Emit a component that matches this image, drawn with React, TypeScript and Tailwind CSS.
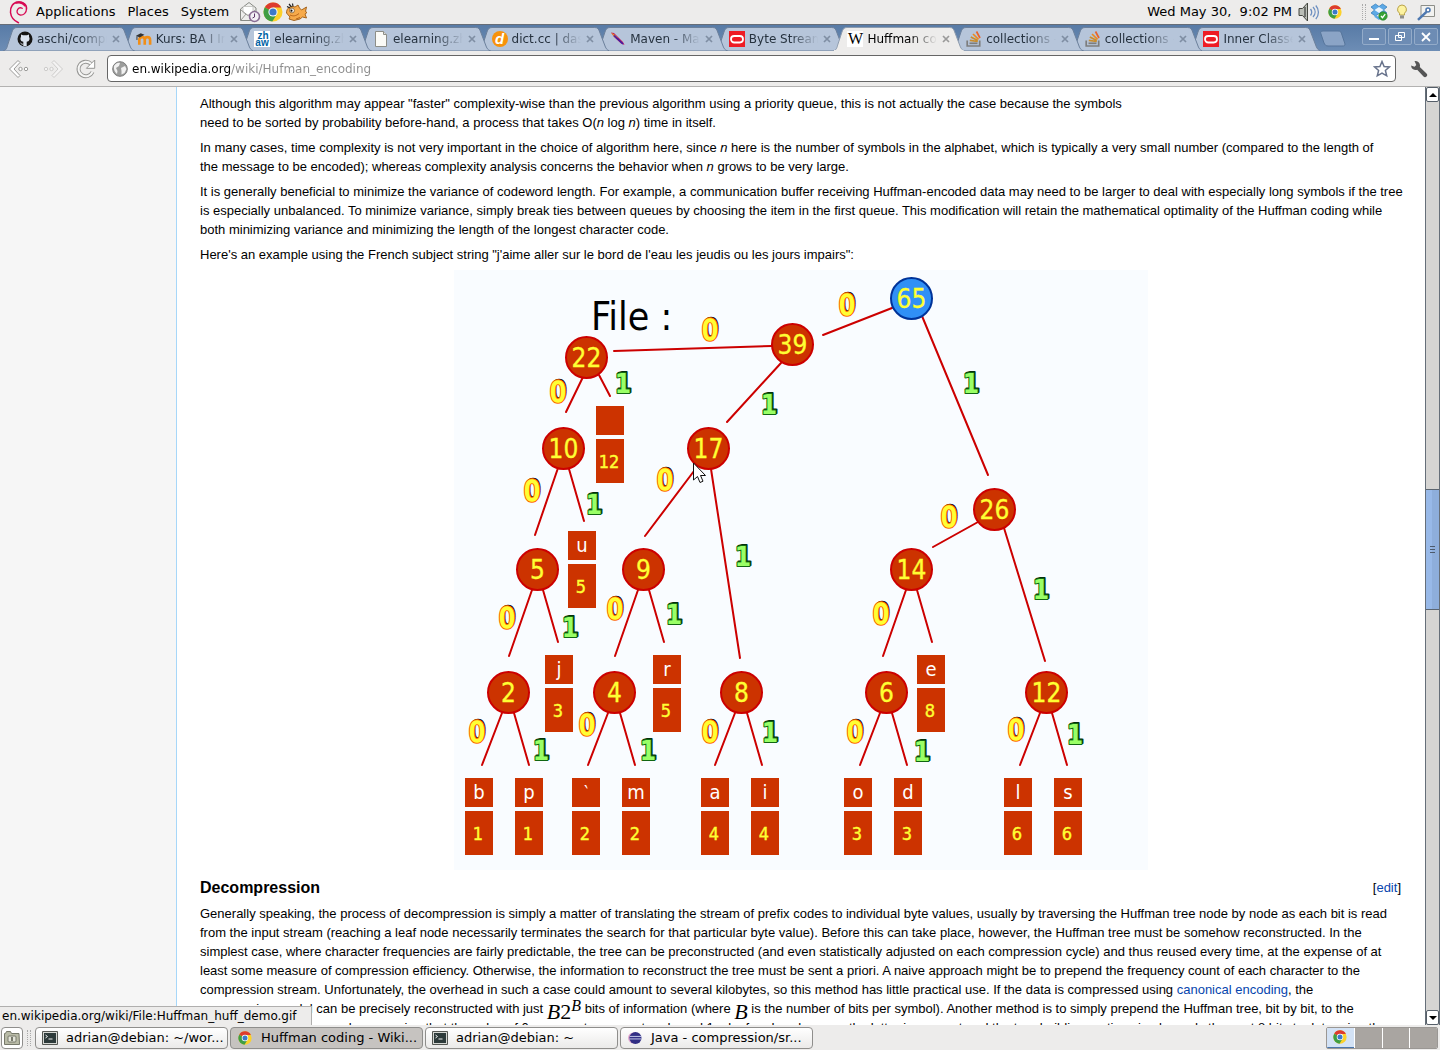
import type { ReactNode } from "react";

/* ---------- icons ---------- */

function DebianSwirl() {
  return (
    <svg viewBox="0 0 20 24" className="h-6 w-5" fill="none" stroke="#d70a53" strokeLinecap="round">
      <path d="M18.500 9C19 4.500 15.500 1.800 10.500 2 5 2.300 2 7 2.500 12.500 3 17 6.500 21 10.500 22.800" strokeWidth="1.500" />
      <path d="M17 5.500C15 2.500 11.500 1.800 8 2.800" strokeWidth="2.200" />
      <path d="M18.500 9c0 4-3 6.300-6.300 6-3-.300-4-3.500-2.500-5.700 1-1.500 3-2 4.500-1" strokeWidth="1.300" />
    </svg>
  );
}

function MailIcon() {
  return (
    <svg viewBox="0 0 22 22" className="size-[22px]">
      <path d="M1.500 8 10 1.500l7 5.500v12.500h-15.500z" fill="#eeeeec" stroke="#888a85" />
      <path d="M4 5.500h10v6l-5 3-5-3z" fill="#fff" stroke="#b5b5b2" strokeWidth=".7" />
      <path d="m2 9 7 5.500 7.500-5.500M2 19l5-6M16 19l-5-6" fill="none" stroke="#9a9a96" />
      <circle cx="15.500" cy="15.500" r="5" fill="#f3eff5" stroke="#8a6d94" strokeWidth="1.600" />
      <path d="M15.500 12.500v3.500l-2 1" fill="none" stroke="#5c3566" />
    </svg>
  );
}

function ChromeIcon({ className }: { className: string }) {
  return (
    <svg viewBox="0 0 20 20" className={className}>
      <circle cx="10" cy="10" r="9.500" fill="#fcd12a" />
      <path d="M10 10 1.800 5.200A9.500 9.500 0 0 1 18.400 5.600H10z" fill="#dd3b2f" />
      <path d="M10 10 1.800 5.200A9.500 9.500 0 0 0 9.300 19.500L13.800 12.300z" fill="#3f9e44" />
      <circle cx="10" cy="10" r="4.600" fill="#fff" />
      <circle cx="10" cy="10" r="3.600" fill="#3b79c9" />
    </svg>
  );
}

function FishIcon() {
  return (
    <svg viewBox="0 0 24 20" className="h-5 w-6">
      <path d="M1.500 11C1.500 6 5 3.500 10 5l3-2 1.500 3 2 2 5-3-1 4.500 1.500 1-2 1.500 1.500 4-4-1-2.500 2-6 1.500-5-1.500 1-2z" fill="#f7aa4a" stroke="#9c5a14" strokeWidth=".9" />
      <path d="M5 13c3 1.500 6 1 9-1.500M11 17l4-1.500" stroke="#b8651a" fill="none" />
      <circle cx="7" cy="8.500" r="2.400" fill="#fff" stroke="#6b4a20" strokeWidth=".7" />
      <circle cx="6.500" cy="8.700" r="1.100" fill="#111" />
      <path d="m2 4.500 3 1.500M4 2l2.500 3M7.500 1.500l.5 3" stroke="#222" strokeWidth="1.200" />
    </svg>
  );
}

function SpeakerIcon() {
  return (
    <svg viewBox="0 0 22 20" className="h-5 w-[22px]">
      <path d="M1 6.500h3.500L9.500 1v18L4.500 13.500H1z" fill="#babdb6" stroke="#44463f" />
      <path d="M7 5v10" stroke="#555753" strokeWidth="1.500" />
      <path d="M12.500 7c1.500 2 1.500 4.500 0 6.500M15 5c2.800 3 2.800 7 0 10M17.800 3.500c3.500 4 3.500 9.500 0 13.500" fill="none" stroke="#6d8fc0" strokeWidth="1.300" />
    </svg>
  );
}

function DropboxIcon() {
  return (
    <svg viewBox="0 0 18 18" className="size-[18px]">
      <path d="M5.500 1 9 3.500 12.500 1 17 4l-3.500 3L17 10l-4.500 3L9 10.500 5.500 13 1 10l3.500-3L1 4z" fill="#5da9e6" stroke="#2f78b5" strokeWidth=".7" />
      <path d="m4.500 7 4.500-3 4.500 3L9 10z" fill="#e9f4fd" />
      <path d="M4.500 12v2L9 17l3-2" fill="#5da9e6" />
      <circle cx="13" cy="13" r="4.200" fill="#36a336" stroke="#1f7a1f" strokeWidth=".6" />
      <path d="m11 13 1.500 1.700 2.700-3.500" fill="none" stroke="#fff" strokeWidth="1.300" />
    </svg>
  );
}

function BulbIcon() {
  return (
    <svg viewBox="0 0 12 16" className="h-4 w-3">
      <path d="M6 1a4.500 4.500 0 0 0-2.500 8.200V11h5V9.200A4.500 4.500 0 0 0 6 1z" fill="#fdf3a0" stroke="#b8a24a" />
      <path d="M4 11.500h4v3H4z" fill="#8e8f8b" />
    </svg>
  );
}

function SearchToolIcon() {
  return (
    <svg viewBox="0 0 20 20" className="size-5">
      <path d="M5 3.500h13.500v11H5z" fill="#f2f2f0" stroke="#8c8e89" />
      <circle cx="12" cy="8" r="2" fill="#fff" stroke="#4d78b0" strokeWidth="1.600" />
      <path d="m10.500 9.800-8.500 8" stroke="#4d78b0" strokeWidth="2.500" />
    </svg>
  );
}

function GithubIcon() {
  return (
    <svg viewBox="0 0 16 16" className="size-4">
      <circle cx="8" cy="8" r="7.500" fill="#161514" />
      <path d="M4 3.500 6 4.300h4L12 3.500v2.300c1.300 2.500.200 4.700-2.300 5v4.200H6.300v-4.200C3.800 10.500 2.700 8.300 4 5.800z" fill="#dce4ef" />
      <path d="M6.300 13.200c-1.500.300-2-.700-2.800-1.200" stroke="#dce4ef" fill="none" />
    </svg>
  );
}

function MoodleIcon() {
  return (
    <svg viewBox="0 0 17 16" className="size-4">
      <path d="M3.500 14V7.500M9.300 14V8.500M15 14V8.500M3.500 8.500C4.500 5.200 8.800 5.200 9.300 8.500 9.800 5.200 14.500 5.200 15 8.500" fill="none" stroke="#f18e16" strokeWidth="2.800" />
      <path d="M0 4.500 5 2l4 1.500L4 6.500z" fill="#333" />
      <path d="M1 5v4" stroke="#333" />
    </svg>
  );
}

function ZhawIcon() {
  return (
    <svg viewBox="0 0 16 16" className="size-4" textAnchor="middle">
      <path d="M0 0h16v16H0z" fill="#fff" />
      <g className="font-['Liberation_Sans',sans-serif]" fontSize="10" fontWeight="bold" fill="#0064a6">
        <text x="9" y="8">zh</text>
        <text x="8" y="15">aw</text>
      </g>
    </svg>
  );
}

function FileIcon() {
  return (
    <svg viewBox="0 0 16 16" className="size-4">
      <path d="M2.500.5h8l3 3v12h-11z" fill="#fbfbf7" stroke="#8d8e88" />
      <path d="M10.500.5v3h3" fill="#ddd" stroke="#8d8e88" />
    </svg>
  );
}

function DictIcon() {
  return (
    <span aria-hidden="true" className="flex size-4 shrink-0 items-center justify-center rounded-full bg-[#f7920b] font-['Liberation_Sans'] text-[15px] leading-4 font-bold text-white italic">
      d
    </span>
  );
}

function MavenIcon() {
  return (
    <svg viewBox="0 0 16 16" className="size-4">
      <path d="M1 1.500 4 2l9 9 1.500 3-3.500-1.500L4 6z" fill="#c2185b" />
      <path d="M1 1.500 5 4l3 3-3-.500z" fill="#f0a020" />
      <path d="m4 4.500 9 8.500" stroke="#3b1fa8" strokeWidth="1.600" />
    </svg>
  );
}

function OracleIcon() {
  return (
    <svg viewBox="0 0 16 16" className="size-4">
      <path d="M0 0h16v16H0z" fill="#ee1c25" />
      <rect x="2" y="5" width="12" height="6.500" rx="3.200" fill="none" stroke="#fff" strokeWidth="1.800" />
    </svg>
  );
}

function WikiIcon() {
  return (
    <span aria-hidden="true" className="flex size-4 shrink-0 items-center justify-center bg-white font-['Liberation_Serif'] text-base leading-4 text-black">
      W
    </span>
  );
}

function StackIcon() {
  return (
    <svg viewBox="0 0 16 16" className="size-4" fill="none">
      <path d="M1.200 9.500v5.500h12.500V9.500" stroke="#7d7d7d" strokeWidth="1.700" />
      <path d="M3.500 12.300h8" stroke="#7d7d7d" strokeWidth="1.700" />
      <path d="m3.800 9.300 8 1.200M4.800 6l7 3.500" stroke="#c98d2e" strokeWidth="1.700" />
      <path d="m7 3 5.500 5.300" stroke="#ee8a1d" strokeWidth="1.700" />
      <path d="m10.500.5 3.500 6.500" stroke="#e8632a" strokeWidth="1.700" />
    </svg>
  );
}

function BackIcon() {
  return (
    <svg viewBox="0 0 22 20" className="h-5 w-[22px]" fill="#fff" stroke="#9b9b99">
      <path d="M10 1.500 1.500 10l8.500 8.500 2-2L6 10l6-6.500z" />
      <circle cx="12.500" cy="10" r="1.700" />
      <circle cx="18" cy="10" r="1.700" />
    </svg>
  );
}

function ReloadIcon() {
  return (
    <svg viewBox="0 0 20 20" className="size-5">
      <path d="M16.500 13A7.300 7.300 0 1 1 15 4.800" fill="none" stroke="#969694" strokeWidth="4" />
      <path d="M18.700 1v8.300h-8.300z" fill="#fff" stroke="#969694" />
      <path d="M16.500 13A7.300 7.300 0 1 1 15 4.800" fill="none" stroke="#f6f6f5" strokeWidth="2" />
    </svg>
  );
}

function GlobeIcon() {
  return (
    <svg viewBox="0 0 16 16" className="size-4">
      <circle cx="8" cy="8" r="7.300" fill="#9c9d9c" stroke="#7c7c7c" />
      <path d="M2 5c2-3 4-3.500 6-3l-1 3-3 2 1.500 3L5 13C2.500 11 1.500 8 2 5zM9 7l4-2 1.500 3-2 4-3 1.500L9.500 10z" fill="#f1f1f1" />
    </svg>
  );
}

function WrenchIcon() {
  return (
    <svg viewBox="0 0 18 18" className="size-[18px]">
      <path d="M4.500 1A4.700 4.700 0 0 1 9.800 7l6.700 6.500a2 2 0 0 1-3 3L7.200 9.700A4.700 4.700 0 0 1 1 5.500l3.500 1.200L6.300 5z" fill="#555" />
    </svg>
  );
}

function TerminalIcon() {
  return (
    <svg viewBox="0 0 16 14" className="h-3.5 w-4">
      <path d="M.5.500h15v13H.5z" fill="#d7d8d4" stroke="#555753" />
      <path d="M2 2h12v10H2z" fill="#2e3b3b" />
      <path d="m3.500 4 2 1.500-2 1.500M6.500 8h4" fill="none" stroke="#eee" />
    </svg>
  );
}

function EclipseIcon() {
  return (
    <svg viewBox="0 0 15 14" className="size-3.5">
      <circle cx="6" cy="7" r="6" fill="#e3a8cf" />
      <circle cx="8" cy="7" r="6.500" fill="#312e84" />
      <path d="M2 5.300h12.500M1.500 8h13" stroke="#cdd3f0" />
    </svg>
  );
}

function FolderIcon() {
  return (
    <svg viewBox="0 0 16 16" className="size-4">
      <path d="M.500 3.500h1l1-2h4l1 2h7.500l.500 11h-15z" fill="#b9bba7" stroke="#76786a" />
      <rect x="4" y="6" width="8" height="6" rx="1" fill="#e4e5da" stroke="#76786a" />
      <path d="M8 7v4" stroke="#76786a" strokeWidth="2" />
    </svg>
  );
}

/* ---------- tab strip ---------- */

type TabInfo = { title: string; icon: ReactNode; active?: boolean; layer: string };

const tabs: TabInfo[] = [
  { title: "aschi/compression", icon: <GithubIcon />, layer: "z-11" },
  { title: "Kurs: BA I Informatik", icon: <MoodleIcon />, layer: "z-10" },
  { title: "elearning.zhaw", icon: <ZhawIcon />, layer: "z-9" },
  { title: "elearning.zhaw", icon: <FileIcon />, layer: "z-8" },
  { title: "dict.cc | das Wörter", icon: <DictIcon />, layer: "z-7" },
  { title: "Maven - Maven", icon: <MavenIcon />, layer: "z-6" },
  { title: "Byte Streams", icon: <OracleIcon />, layer: "z-5" },
  { title: "Huffman coding", icon: <WikiIcon />, active: true, layer: "z-20" },
  { title: "collections -", icon: <StackIcon />, layer: "z-4" },
  { title: "collections -", icon: <StackIcon />, layer: "z-3" },
  { title: "Inner Classes", icon: <OracleIcon />, layer: "z-2" },
];

function Tab({ tab }: { tab: TabInfo }) {
  return (
    <div className={`relative flex h-6 min-w-0 flex-1 items-center pr-px pl-3.5 text-xs leading-4 ${tab.layer}`}>
      <svg viewBox="0 0 132 24" preserveAspectRatio="none" className="absolute top-0 left-0 h-full w-[calc(100%+13px)]">
        <path
          d="M0 24C4 23 4 20 5 17L9 5C10 2 11 .5 14 .5H117C120 .5 121 2 122 5L127 18C128 21 129 23 132 24Z"
          fill={tab.active ? "#edeceb" : "#b6c5da"}
          stroke={tab.active ? "#8e9cae" : "#6b7f9b"}
        />
        {tab.active && <path d="M1 24H131" stroke="#edeceb" strokeWidth="2" />}
      </svg>
      <button className="relative flex min-w-0 flex-1 items-center gap-1 text-left">
        <span className="shrink-0">{tab.icon}</span>
        <span
          className={`flex-1 overflow-hidden whitespace-nowrap [mask-image:linear-gradient(to_right,black_60%,transparent_100%)] ${tab.active ? "text-black" : "text-[#26323f]"}`}
        >
          {tab.title}
        </span>
      </button>
      <button aria-label={`Close ${tab.title}`} className="relative ml-1 flex size-2.5 shrink-0 items-center justify-center">
        <svg viewBox="0 0 8 8" className="size-2">
          <path d="m1 1 6 6M7 1 1 7" stroke={tab.active ? "#9a9a9a" : "#7f8ea3"} strokeWidth="1.700" />
        </svg>
      </button>
    </div>
  );
}

function WindowButton({ label, children }: { label: string; children: ReactNode }) {
  return (
    <button aria-label={label} className="flex h-[17px] w-6 items-center justify-center rounded-xs border border-[#93abc9] bg-[#6d8cb4]">
      <svg viewBox="0 0 12 12" className="size-3" fill="none" stroke="#fff">
        {children}
      </svg>
    </button>
  );
}

/* ---------- Huffman tree figure ---------- */

const nodes: [number, number, number][] = [
  [39, 792.5, 344.5], [22, 586.5, 357.5], [10, 563.5, 448.5], [17, 708.5, 448.5], [26, 994.5, 509.5],
  [5, 537.5, 569.5], [9, 643.5, 569.5], [14, 911.5, 569.5], [2, 508.5, 692.5], [4, 614.5, 692.5],
  [8, 741.5, 692.5], [6, 886.5, 692.5], [12, 1046.5, 692.5], [65, 911.5, 298.5],
];

const edges: [number, number, number, number][] = [
  [892, 308, 823, 335], [922, 316, 988, 475], [772, 346, 614, 351], [781, 363, 727, 422],
  [583, 377, 566, 412], [599, 375, 610, 396], [558, 468, 535, 535], [569, 469, 584, 521],
  [694, 471, 645, 536], [711, 469, 740, 658], [978, 522, 933, 547], [1004, 528, 1045, 661],
  [532, 590, 509, 656], [543, 590, 558, 642], [638, 590, 615, 656], [649, 590, 664, 642],
  [906, 590, 883, 656], [917, 590, 932, 642], [502, 713, 482, 765], [514, 713, 529, 765],
  [608, 713, 588, 765], [620, 713, 635, 765], [735, 713, 715, 765], [747, 713, 762, 765],
  [880, 713, 860, 765], [892, 713, 907, 765], [1040, 713, 1020, 765], [1052, 713, 1067, 765],
];

const zeros: [number, number][] = [
  [847, 305], [710, 330], [558, 392], [532, 491], [665, 480], [949, 517], [507, 618], [615, 609],
  [881, 614], [477, 732], [587, 725], [710, 732], [855, 732], [1016, 730],
];

const ones: [number, number][] = [
  [623, 383], [769, 404], [971, 383], [594, 504], [743, 556], [1041, 589], [570, 627], [674, 614],
  [541, 750], [648, 750], [770, 732], [922, 751], [1075, 734],
];

const leaves: [string, number, number, number][] = [
  ["", 12, 596, 406], ["u", 5, 568, 531], ["j", 3, 545, 655], ["r", 5, 653, 655], ["e", 8, 917, 655],
  ["b", 1, 465, 778], ["p", 1, 515, 778], ["‵", 2, 572, 778], ["m", 2, 622, 778], ["a", 4, 701, 778],
  ["i", 4, 751, 778], ["o", 3, 844, 778], ["d", 3, 894, 778], ["l", 6, 1004, 778], ["s", 6, 1054, 778],
];

function Zero({ x, y }: { x: number; y: number }) {
  return (
    <g fontSize="28" strokeLinejoin="round">
      <text x={x + 1} y={y + 9} fill="#000" stroke="#000" strokeWidth="2.500">0</text>
      <text x={x} y={y + 10} fill="#ff6600" stroke="#ff6600" strokeWidth="3.500">0</text>
      <text x={x} y={y + 10} fill="#ffff33" stroke="#ffff33" strokeWidth="1.500">0</text>
    </g>
  );
}

function One({ x, y }: { x: number; y: number }) {
  return (
    <g fontSize="26" fontWeight="bold" strokeLinejoin="round">
      <text x={x + 1} y={y + 9} fill="#03300a" stroke="#03300a" strokeWidth="2">1</text>
      <text x={x} y={y + 10} fill="#99ff66" stroke="#116611" strokeWidth="2" paintOrder="stroke">1</text>
    </g>
  );
}

function HuffmanTree() {
  return (
    <svg
      viewBox="454 270 694 600"
      role="img"
      aria-label="Huffman tree"
      className="block h-[600px] w-[694px] bg-[#f9fcff] font-['DejaVu_Sans_Condensed','DejaVu_Sans',sans-serif]"
      textAnchor="middle"
    >
      <text x="591" y="330" fontSize="39" textAnchor="start">File :</text>
      {edges.map(([x1, y1, x2, y2]) => (
        <path key={`${x1}-${y1}`} d={`M${x1} ${y1}L${x2} ${y2}`} stroke="#cc0000" strokeWidth="2" strokeLinecap="round" />
      ))}
      {nodes.map(([value, x, y]) => (
        <g key={value + "-" + x}>
          <circle cx={x} cy={y} r="20.5" fill={value === 65 ? "#3090f6" : "#cc3300"} stroke={value === 65 ? "#003399" : "#cc0000"} strokeWidth="2" />
          <text x={x} y={y + 9} fontSize="26" fill="#ffff33" stroke="#ffff33" strokeWidth=".3">{value}</text>
        </g>
      ))}
      {leaves.map(([letter, count, x, y]) => (
        <g key={`${x}-${y}`}>
          <path d={`M${x} ${y}h28v29h-28zM${x} ${y + 33}h28v44h-28z`} fill="#cc3300" />
          <text x={x + 14} y={y + 21} fontSize="20" fill="#fff">{letter}</text>
          <text x={x + 13} y={y + 62} fontSize="18" fill="#ffff33" stroke="#ffff33" strokeWidth=".4">{count}</text>
        </g>
      ))}
      {zeros.map(([x, y]) => (
        <Zero key={`${x}-${y}`} x={x} y={y} />
      ))}
      {ones.map(([x, y]) => (
        <One key={`${x}-${y}`} x={x} y={y} />
      ))}
      <path d="M693.500 463v17l4-3.500 2.500 6 3-1.300-2.500-5.700h5z" fill="#fff" stroke="#111" />
    </svg>
  );
}

/* ---------- taskbar ---------- */

function TaskButton({ icon, label, active }: { icon: ReactNode; label: string; active?: boolean }) {
  return (
    <button
      className={`flex h-[22px] w-[193px] items-center gap-2 rounded-sm border border-[#8f8e8c] pl-1.5 whitespace-nowrap ${active ? "bg-[#c6c3c0]" : "bg-linear-to-b from-white to-[#ebeae9]"}`}
    >
      <span className="flex w-4 shrink-0 justify-center">{icon}</span>
      <span>{label}</span>
    </button>
  );
}

function ScrollButton({ label, d }: { label: string; d: string }) {
  return (
    <button aria-label={label} className="flex h-[15px] w-full shrink-0 items-center justify-center rounded-xs border border-[#555e68] bg-white">
      <svg viewBox="0 0 8 4" className="h-1 w-2">
        <path d={d} />
      </svg>
    </button>
  );
}

export default function App() {
  return (
    <div className="flex h-screen flex-col overflow-hidden bg-[#edeceb] font-['DejaVu_Sans',sans-serif] text-[13px] leading-4 text-black">
      <header className="flex h-6 shrink-0 items-center justify-between pr-1 pl-2">
        <nav className="flex items-center">
          <span className="mr-2"><DebianSwirl /></span>
          <button className="mr-3">Applications</button>
          <button className="mr-3">Places</button>
          <button className="mr-2.5">System</button>
          <MailIcon />
          <span className="mx-0.5"><ChromeIcon className="size-5" /></span>
          <FishIcon />
        </nav>
        <div className="flex items-center">
          <span className="mr-1.5 whitespace-pre">Wed May 30,  9:02 PM</span>
          <SpeakerIcon />
          <span className="mr-5 ml-2"><ChromeIcon className="size-3.5" /></span>
          <span className="mr-1 h-4 w-1 border-x border-dotted border-[#aaa]" />
          <DropboxIcon />
          <span className="mx-2"><BulbIcon /></span>
          <SearchToolIcon />
        </div>
      </header>

      <div className="flex h-[27px] shrink-0 items-end border-t border-[#666d77] bg-linear-to-b from-[#587ba6] to-[#6d8db5] pl-[3px]">
        <div className="flex min-w-0 flex-1">
          {tabs.map((tab, i) => (
            <Tab key={i} tab={tab} />
          ))}
        </div>
        <button aria-label="New tab" className="mr-4 ml-3 self-center">
          <svg viewBox="0 0 26 17" className="h-[17px] w-[26px]">
            <path d="M3 1h15c3 0 3 1 4 4l3 9c0 2-1 2-3 2H8c-2 0-3-1-4-3L1 4C0 2 1 1 3 1z" fill="#8ba4c6" stroke="#56759b" />
          </svg>
        </button>
        <div className="flex gap-0.5 self-start pt-[3px] pr-0.5">
          <WindowButton label="Minimize"><path d="M1 8h10" strokeWidth="2" /></WindowButton>
          <WindowButton label="Restore"><path d="M4.500 1.500h6v5h-6zM1.500 4.500h6v5h-6z" /></WindowButton>
          <WindowButton label="Close"><path d="m2 2 8 8M10 2l-8 8" strokeWidth="1.800" /></WindowButton>
        </div>
      </div>

      <div className="flex h-9 shrink-0 items-center border-b border-[#b3b2b1] pr-3 pl-2">
        <button aria-label="Back" className="mr-3"><BackIcon /></button>
        <button aria-label="Forward" disabled className="mr-3 -scale-x-100 opacity-40"><BackIcon /></button>
        <button aria-label="Reload" className="mr-[11px]"><ReloadIcon /></button>
        <div className="flex h-[27px] flex-1 items-center gap-1 rounded-sm border border-[#666] bg-white px-1">
          <GlobeIcon />
          <label htmlFor="address" className="sr-only">Address</label>
          <input id="address" defaultValue="en.wikipedia.org/wiki/Hufman_encoding" className="min-w-0 flex-1 bg-linear-to-r from-black from-[99px] to-[#8c8c8c] to-[99px] bg-clip-text text-xs text-transparent outline-none" />
          <button aria-label="Bookmark">
            <svg viewBox="0 0 18 18" className="size-[18px]">
              <path d="m9 1.500 2.100 5 5.400.400-4.100 3.600 1.300 5.300L9 13l-4.700 2.800 1.300-5.300L1.500 6.900l5.400-.400z" fill="#fff" stroke="#68738c" strokeWidth="1.500" />
            </svg>
          </button>
        </div>
        <button aria-label="Settings" className="ml-3.5"><WrenchIcon /></button>
      </div>

      <div className="relative flex min-h-0 flex-1">
        <aside className="w-44 shrink-0 bg-[#f6f6f6]" />
        <main className="min-w-0 flex-1 overflow-hidden border-l border-[#a7d7f9] bg-white pt-[7px] pr-6 pl-[23px] font-['Liberation_Sans',sans-serif] text-[13px] leading-[19px] whitespace-nowrap">
          <div className="flex flex-col gap-1.5">
            <p>
              Although this algorithm may appear "faster" complexity-wise than the previous algorithm using a priority queue, this is not actually the case because the symbols<br />
              need to be sorted by probability before-hand, a process that takes O(<i>n</i> log <i>n</i>) time in itself.
            </p>
            <p>
              In many cases, time complexity is not very important in the choice of algorithm here, since <i>n</i> here is the number of symbols in the alphabet, which is typically a very small number (compared to the length of<br />
              the message to be encoded); whereas complexity analysis concerns the behavior when <i>n</i> grows to be very large.
            </p>
            <p>
              It is generally beneficial to minimize the variance of codeword length. For example, a communication buffer receiving Huffman-encoded data may need to be larger to deal with especially long symbols if the tree<br />
              is especially unbalanced. To minimize variance, simply break ties between queues by choosing the item in the first queue. This modification will retain the mathematical optimality of the Huffman coding while<br />
              both minimizing variance and minimizing the length of the longest character code.
            </p>
            <p>Here's an example using the French subject string "j'aime aller sur le bord de l'eau les jeudis ou les jours impairs":</p>
            <div className="flex justify-center">
              <HuffmanTree />
            </div>
          </div>
          <div className="flex items-center justify-between pt-2 pb-[7px]">
            <h3 className="text-base leading-[19px] font-bold">Decompression</h3>
            <span>[<a href="#edit" className="text-[#0645ad]">edit</a>]</span>
          </div>
          <p>
            Generally speaking, the process of decompression is simply a matter of translating the stream of prefix codes to individual byte values, usually by traversing the Huffman tree node by node as each bit is read<br />
            from the input stream (reaching a leaf node necessarily terminates the search for that particular byte value). Before this can take place, however, the Huffman tree must be somehow reconstructed. In the<br />
            simplest case, where character frequencies are fairly predictable, the tree can be preconstructed (and even statistically adjusted on each compression cycle) and thus reused every time, at the expense of at<br />
            least some measure of compression efficiency. Otherwise, the information to reconstruct the tree must be sent a priori. A naive approach might be to prepend the frequency count of each character to the<br />
            compression stream. Unfortunately, the overhead in such a case could amount to several kilobytes, so this method has little practical use. If the data is compressed using <a href="#canonical" className="text-[#0645ad]">canonical encoding</a>, the<br />
            compression model can be precisely reconstructed with just{" "}
            <span className="inline-block h-4 align-middle font-['Liberation_Serif'] text-[22px] leading-5"><i>B</i>2<sup className="text-base leading-none"><i>B</i></sup></span>{" "}
            bits of information (where{" "}
            <span className="inline-block h-4 align-middle font-['Liberation_Serif'] text-[22px] leading-5"><i>B</i></span>{" "}
            is the number of bits per symbol). Another method is to simply prepend the Huffman tree, bit by bit, to the<br />
            output stream. For example, assuming that the value of 0 represents a parent node and 1 a leaf node, whenever the latter is encountered the tree building routine simply reads the next 8 bits to determine the
          </p>
        </main>
        <div className="flex w-[15px] shrink-0 flex-col border-x border-[#666f79] bg-[#d6d5d3]">
          <ScrollButton label="Scroll up" d="M0 4 4 0l4 4z" />
          <div className="flex flex-1 flex-col">
            <div className="grow-[387]" />
            <div className="flex h-[121px] flex-col items-center justify-center gap-0.5 border-y border-[#5b6570] bg-linear-to-r from-[#98b9e8] from-50% to-[#8eaedb] to-50%">
              <span className="h-px w-[5px] bg-[#4d5a6b]" />
              <span className="h-px w-[5px] bg-[#4d5a6b]" />
              <span className="h-px w-[5px] bg-[#4d5a6b]" />
            </div>
            <div className="grow-[400]" />
          </div>
          <ScrollButton label="Scroll down" d="M0 0l4 4 4-4z" />
        </div>
        <div className="absolute bottom-0 left-0 h-[19px] min-w-78 border-t border-r border-[#b0afae] bg-[#edeceb] pr-1 pl-0.5 text-xs leading-[18px]">
          en.wikipedia.org/wiki/File:Huffman_huff_demo.gif
        </div>
      </div>

      <footer className="flex h-[25px] shrink-0 items-center justify-between pr-0.5 pl-px">
        <div className="flex items-center gap-0.5">
          <button aria-label="Show desktop" className="flex h-[22px] w-[22px] items-center justify-center rounded-sm border border-[#8f8e8c] bg-white">
            <FolderIcon />
          </button>
          <span className="mx-0.5 h-4 w-1 border-x border-dotted border-[#aaa]" />
          <TaskButton icon={<TerminalIcon />} label="adrian@debian: ~/wor..." />
          <TaskButton icon={<ChromeIcon className="size-3.5" />} label="Huffman coding - Wiki..." active />
          <TaskButton icon={<TerminalIcon />} label="adrian@debian: ~" />
          <TaskButton icon={<EclipseIcon />} label="Java - compression/sr..." />
        </div>
        <div className="flex h-[22px] w-28 gap-px overflow-hidden rounded-xs border border-[#9a9794] bg-white">
          <button aria-label="Workspace 1" className="flex flex-1 items-center justify-center border-b border-[#4a76ad] bg-[#d3e2f5]">
            <ChromeIcon className="size-3.5" />
          </button>
          <button aria-label="Workspace 2" className="flex-1 bg-[#a9a5a1]" />
          <button aria-label="Workspace 3" className="flex-1 bg-[#a9a5a1]" />
          <button aria-label="Workspace 4" className="flex-1 bg-[#a9a5a1]" />
        </div>
      </footer>
    </div>
  );
}
